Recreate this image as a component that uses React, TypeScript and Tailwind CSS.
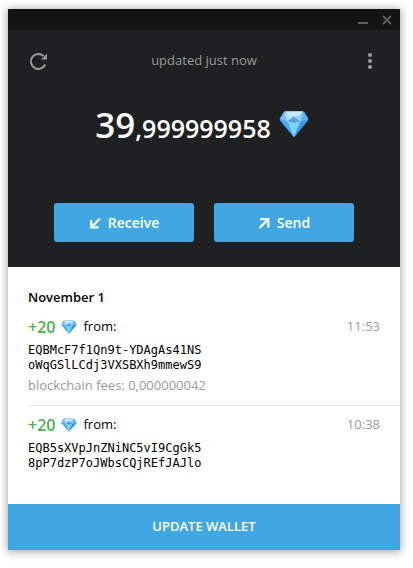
import type { ReactNode } from 'react'

type Transaction = {
  id: number
  amount: string
  time: string
  address: [string, string]
  fees?: string
}

const transactions: Transaction[] = [
  {
    id: 1,
    amount: '+20',
    time: '11:53',
    address: ['EQBMcF7f1Qn9t-YDAgAs41NS', 'oWqGSlLCdj3VXSBXh9mmewS9'],
    fees: '0,000000042',
  },
  {
    id: 2,
    amount: '+20',
    time: '10:38',
    address: ['EQB5sXVpJnZNiNC5vI9CgGk5', '8pP7dzP7oJWbsCQjREfJAJlo'],
  },
]

function Gem({ className }: { className?: string }) {
  return (
    <svg viewBox="0 0 30 28" preserveAspectRatio="none" className={className} aria-hidden="true">
      <path d="M7 1h16q1.500 0 2.500 1L29 8q.6 1.200 0 2.400L15 27.500 1 10.400q-.6-1.200 0-2.400L4.500 2Q5.500 1 7 1z" fill="#3d9df0" />
      <path d="M1.500 9.500 8.500 11.500 15 27z" fill="#4aaaf4" />
      <path d="M8.500 11.500 15 12.500l6.500-1L15 27z" fill="#7fd4fe" />
      <path d="M21.500 11.500l7-2L15 27z" fill="#3596ec" />
      <path d="M6.500 1.500h17L28.500 9 21.500 11.500 15 12.500 8.500 11.500 1.500 9z" fill="#86c5f3" />
      <path d="M5.500 2.500 8.500 11.500 1.500 9z" fill="#7dc0f2" />
      <path d="M6.500 1.500h17L21 5.500 15 6.500 9 5.500z" fill="#c9e9fb" />
      <path d="M9 5.500l6 1-6.500 5-3-9z" fill="#b5dff9" />
      <path d="M15 6.500l6.500 5-6.500 1-6.500-1z" fill="#5a9fda" />
      <path d="M15 6.500l6-1 .5 6z" fill="#94cdf5" />
      <path d="M24.500 2.500l4 6.500-7 2.500z" fill="#64afea" />
    </svg>
  )
}

function ActionButton({ icon, children }: { icon: ReactNode; children: ReactNode }) {
  return (
    <button
      type="button"
      className="flex h-[39px] flex-1 items-center justify-center gap-[7px] rounded-[3px] bg-[#40a7e3] text-sm font-semibold text-white"
    >
      {icon}
      {children}
    </button>
  )
}

function TransactionRow({ item }: { item: Transaction }) {
  return (
    <li className="ml-5 h-[98px] border-b border-[#e7e7e7] pt-[7px] pr-5 last:border-b-0">
      <div className="flex h-6 items-center">
        <span className="text-base leading-6 font-semibold text-[#4bb34b]">{item.amount}</span>
        <Gem className="mx-[6px] h-[14px] w-4" />
        <span className="text-[13px]">from:</span>
        <time className="ml-auto text-[13px] text-[#999]">{item.time}</time>
      </div>
      <p className="mt-1 font-['DejaVu_Sans_Mono',monospace] text-[12px] leading-[15px]">
        {item.address[0]}
        <br />
        {item.address[1]}
      </p>
      {item.fees && (
        <p className="mt-[3px] text-[13px] leading-[18px] text-[#999]">blockchain fees: {item.fees}</p>
      )}
    </li>
  )
}

export default function App() {
  return (
    <div className="min-h-screen bg-white pt-[9px] pr-[13px] pb-4 pl-2 font-['Open_Sans',sans-serif] text-black">
      <main className="bg-white shadow-[0_1px_8px_1px_rgba(0,0,0,0.35)]">
        {/* Title bar */}
        <div className="flex h-[21px] items-center justify-end gap-[14px] bg-[#131313] pr-2 text-[#606060]">
          <button type="button" aria-label="Minimize">
            <svg viewBox="0 0 10 10" className="h-[10px] w-[10px]">
              <path d="M0 7h10v2H0z" fill="currentColor" />
            </svg>
          </button>
          <button type="button" aria-label="Close">
            <svg viewBox="0 0 10 10" className="h-[10px] w-[10px]">
              <path d="M1 1l8 8M9 1L1 9" stroke="currentColor" strokeWidth="1.8" />
            </svg>
          </button>
        </div>

        {/* Balance */}
        <header className="bg-[#1e2021] pb-[25px] text-white">
          <div className="flex h-[62px] items-center justify-between px-5 text-[#999]">
            <button type="button" aria-label="Refresh">
              <svg viewBox="0 0 20 20" className="h-5 w-5">
                <path d="M17.200 13.500A7.500 7.500 0 1 1 15.600 5" fill="none" stroke="currentColor" strokeWidth="2" />
                <path d="M19 2.500v6h-6z" fill="currentColor" />
              </svg>
            </button>
            <span className="text-[13px]">updated just now</span>
            <button type="button" aria-label="Menu">
              <svg viewBox="0 0 20 20" className="h-5 w-5" fill="currentColor">
                <circle cx="10" cy="4" r="2.1" />
                <circle cx="10" cy="10" r="2.1" />
                <circle cx="10" cy="16" r="2.1" />
              </svg>
            </button>
          </div>
          <div className="flex h-16 items-center justify-center gap-2 pr-1">
            <p className="text-[25px] leading-none font-semibold">
              <span className="text-[35px]">39</span>,999999958
            </p>
            <Gem className="h-7 w-[30px]" />
          </div>
          <div className="mt-[47px] flex gap-5 px-[46px]">
            <ActionButton
              icon={
                <svg viewBox="0 0 12 12" className="h-3 w-3" fill="none" stroke="currentColor" strokeWidth="2.2">
                  <path d="M11 1.500 3 9.500M2.200 3v7.300h7.300" />
                </svg>
              }
            >
              Receive
            </ActionButton>
            <ActionButton
              icon={
                <svg viewBox="0 0 12 12" className="h-3 w-3" fill="none" stroke="currentColor" strokeWidth="2.2">
                  <path d="M1.500 11 9.500 3M2 2.200h8.300v8.300" />
                </svg>
              }
            >
              Send
            </ActionButton>
          </div>
        </header>

        {/* History */}
        <section className="pt-5">
          <h2 className="px-5 text-[13px] leading-[21px] font-semibold">November 1</h2>
          <ul>
            {transactions.map((item) => (
              <TransactionRow key={item.id} item={item} />
            ))}
          </ul>
        </section>

        <button type="button" className="h-[46px] w-full bg-[#40a7e3] text-[13px] font-semibold text-white">
          UPDATE WALLET
        </button>
      </main>
    </div>
  )
}
